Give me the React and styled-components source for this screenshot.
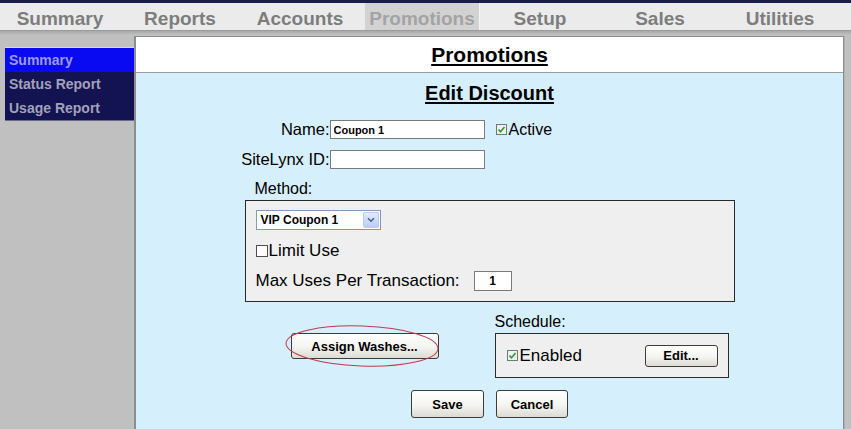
import React from 'react';
import styled, { createGlobalStyle } from 'styled-components';

const GlobalStyle = createGlobalStyle`
  html, body { margin: 0; padding: 0; height: 100%; overflow: hidden; }
  body { background: #c0c0c0; font-family: "Liberation Sans", Arial, sans-serif; color: #000; }
  #root { height: 100%; }
`;

const Page = styled.div`
  display: flex;
  flex-direction: column;
  height: 100%;
`;

const TopStrip = styled.div`
  flex: none;
  height: 3px;
  background: #1b1b4d;
`;

const TabBar = styled.nav`
  flex: none;
  display: flex;
  height: 27px;
  background: #ebebeb;
  border-bottom: 1px solid #9a9a9a;
`;

const Tab = styled.div`
  box-sizing: border-box;
  width: ${(p) => (p.$active ? '115px' : '120px')};
  margin-left: ${(p) => (p.$active ? '5px' : '0')};
  padding-top: 4px;
  line-height: 23px;
  text-align: center;
  font-size: 19px;
  font-weight: bold;
  color: ${(p) => (p.$active ? '#a3a3a3' : '#7d7d7d')};
  background: ${(p) => (p.$active ? '#d2d2d2' : 'transparent')};
  border-right: ${(p) => (p.$active ? '1px solid #f6f6f6' : 'none')};
`;

const Body = styled.div`
  flex: 1;
  min-height: 0;
  display: flex;
  padding-top: 5px;
  background: linear-gradient(#a9a9a9, #c0c0c0 4px);
`;

const Sidebar = styled.aside`
  flex: none;
  box-sizing: border-box;
  width: 134px;
  padding: 11px 0 0 5px;
`;

const Menu = styled.ul`
  list-style: none;
  margin: 0;
  padding: 0;
  background: #131352;
  border-top: 1px solid #d8d8e8;
  border-bottom: 1px solid #6a6a8a;
`;

const MenuItem = styled.li`
  height: 24px;
  line-height: 24px;
  padding-left: 4px;
  font-size: 14px;
  font-weight: bold;
  color: ${(p) => (p.$active ? '#9a9ae4' : '#a2a2b8')};
  background: ${(p) => (p.$active ? '#0a0af2' : '#131352')};
`;

const Main = styled.main`
  flex: 1;
  display: flex;
  flex-direction: column;
  border-left: 2px solid #8a8e8e;
  border-top: 1px solid #8c8c8c;
  border-right: 1px solid #8c8c8c;
  background: #d5effc;
`;

const Gutter = styled.div`
  flex: none;
  width: 7px;
  border-left: 1px solid #b0b0b0;
  box-sizing: border-box;
`;

const MainHeader = styled.header`
  height: 35px;
  display: flex;
  align-items: center;
  justify-content: center;
  background: #fff;
  border-bottom: 1px solid #9c9c9c;
`;

const Title = styled.h1`
  margin: 0;
  font-size: 21px;
  font-weight: bold;
  text-decoration: underline;
  text-underline-offset: 2px;
`;

const Content = styled.section`
  flex: 1;
  padding-top: 8px;
`;

const Heading = styled.h2`
  margin: 0;
  text-align: center;
  font-size: 20px;
  line-height: 24px;
  font-weight: bold;
  text-decoration: underline;
  text-underline-offset: 2px;
`;

const Form = styled.div`
  width: 490px;
  margin: 15px auto 0;
`;

const FieldRow = styled.div`
  display: flex;
  align-items: center;
  height: 19px;
  margin-top: ${(p) => p.$gap || 0}px;
`;

const Label = styled.label`
  width: 85px;
  display: flex;
  justify-content: flex-end;
  white-space: nowrap;
  font-size: 16.5px;
`;

const TextInput = styled.input`
  box-sizing: border-box;
  width: ${(p) => p.$w || 155}px;
  height: ${(p) => p.$h || 19}px;
  margin: 0 0 0 ${(p) => p.$ml || 0}px;
  padding: 0 3px;
  border: 1px solid #7a7a7a;
  background: #fff;
  font-family: "Liberation Sans", Arial, sans-serif;
  font-size: ${(p) => p.$fs || 11}px;
  font-weight: bold;
  color: #000;
  text-align: ${(p) => (p.$center ? 'center' : 'left')};
  outline: none;
`;

const CheckLabel = styled.span`
  display: flex;
  align-items: center;
  margin-left: ${(p) => p.$ml || 0}px;
  font-size: ${(p) => p.$fs || 16}px;
  white-space: nowrap;
`;

const Box = styled.span`
  box-sizing: border-box;
  width: ${(p) => (p.$checked ? 11 : 12)}px;
  height: ${(p) => (p.$checked ? 11 : 12)}px;
  margin-right: ${(p) => (p.$checked ? 2 : 1)}px;
  border: 1px solid ${(p) => (p.$checked ? '#6c7a80' : '#4f4f4f')};
  background: ${(p) => (p.$checked ? '#eef2ee' : '#fff')};
  display: inline-flex;
  align-items: center;
  justify-content: center;
`;

const Check = ({ checked }) => (
  <Box $checked={checked}>
    {checked && (
      <svg width="9" height="9" viewBox="0 0 9 9">
        <path d="M1.5 4.5 L3.5 6.7 L7.5 2" fill="none" stroke="#2e9c2e" strokeWidth="1.6" />
      </svg>
    )}
  </Box>
);

const GroupLabel = styled.div`
  margin-top: ${(p) => p.$gap || 0}px;
  padding-left: ${(p) => p.$pl || 0}px;
  line-height: 20px;
  font-size: 16px;
`;

const Fieldset = styled.div`
  margin-top: 1px;
  padding: 9px 10px 10px;
  border: 1px solid #2a2a2a;
  background: #efefef;
`;

const Select = styled.div`
  box-sizing: border-box;
  width: 125px;
  height: 20px;
  display: flex;
  align-items: center;
  padding-left: 4px;
  border: 1px solid #7f9db9;
  background: #fff;
  font-size: 12px;
  font-weight: bold;
`;

const SelectArrow = styled.span`
  box-sizing: border-box;
  margin-left: auto;
  margin-right: 1px;
  width: 16px;
  height: 16px;
  display: flex;
  align-items: center;
  justify-content: center;
  border: 1px solid #b8cbf2;
  border-radius: 2px;
  background: linear-gradient(#e2ebfe, #b9cdf8);
`;

const OptionRow = styled.div`
  display: flex;
  align-items: center;
  height: 20px;
  margin-top: ${(p) => p.$gap || 0}px;
  font-size: 17px;
`;

const BottomGrid = styled.div`
  display: grid;
  grid-template-columns: 250px 234px;
  margin-top: 10px;
`;

const ScheduleLabel = styled(GroupLabel)`
  grid-column: 2;
  grid-row: 1;
  margin-bottom: 1px;
`;

const Marked = styled.div`
  grid-column: 1;
  grid-row: 2;
  align-self: start;
  justify-self: start;
  margin-left: 46px;
  position: relative;
`;

const Ring = styled.svg`
  position: absolute;
  left: -8px;
  top: -8px;
  pointer-events: none;
  overflow: visible;
`;

const Button = styled.button`
  box-sizing: border-box;
  width: ${(p) => p.$w}px;
  height: ${(p) => p.$h}px;
  margin: 0;
  padding: 0;
  border: 1px solid #3c3c3c;
  border-radius: 3px;
  background: linear-gradient(#ffffff, #f4f4f0 55%, #dcdcd4);
  font-family: "Liberation Sans", Arial, sans-serif;
  font-size: 13px;
  font-weight: bold;
  color: #000;
  margin-left: ${(p) => (p.$push ? 'auto' : '0')};
`;

const ScheduleBox = styled.div`
  grid-column: 2;
  grid-row: 2;
  box-sizing: border-box;
  height: 45px;
  display: flex;
  align-items: center;
  padding: 0 10px 0 11px;
  border: 1px solid #2a2a2a;
  background: #efefef;
`;

const Actions = styled.div`
  display: flex;
  justify-content: center;
  gap: 12px;
  margin-top: 12px;
`;

const tabs = ['Summary', 'Reports', 'Accounts', 'Promotions', 'Setup', 'Sales', 'Utilities'];
const menu = ['Summary', 'Status Report', 'Usage Report'];

export default function App() {
  return (
    <>
      <GlobalStyle />
      <Page>
        <TopStrip />
        <TabBar>
          {tabs.map((t) => (
            <Tab key={t} $active={t === 'Promotions'}>{t}</Tab>
          ))}
        </TabBar>
        <Body>
          <Sidebar>
            <Menu>
              {menu.map((m, i) => (
                <MenuItem key={m} $active={i === 0}>{m}</MenuItem>
              ))}
            </Menu>
          </Sidebar>
          <Main>
            <MainHeader>
              <Title>Promotions</Title>
            </MainHeader>
            <Content>
              <Heading>Edit Discount</Heading>
              <Form>
                <FieldRow>
                  <Label>Name:</Label>
                  <TextInput readOnly defaultValue="Coupon 1" />
                  <CheckLabel $ml={11}>
                    <Check checked />
                    Active
                  </CheckLabel>
                </FieldRow>
                <FieldRow $gap={11}>
                  <Label>SiteLynx ID:</Label>
                  <TextInput readOnly defaultValue="" />
                </FieldRow>
                <GroupLabel $gap={10} $pl={10}>Method:</GroupLabel>
                <Fieldset>
                  <Select>
                    VIP Coupon 1
                    <SelectArrow>
                      <svg width="8" height="6" viewBox="0 0 8 6">
                        <path d="M1 1.2 L4 4.2 L7 1.2" fill="none" stroke="#4a5f8c" strokeWidth="1.6" />
                      </svg>
                    </SelectArrow>
                  </Select>
                  <OptionRow $gap={11}>
                    <Check />
                    Limit Use
                  </OptionRow>
                  <OptionRow $gap={10}>
                    Max Uses Per Transaction:
                    <TextInput readOnly defaultValue="1" $w={38} $h={20} $ml={14} $fs={12} $center />
                  </OptionRow>
                </Fieldset>
                <BottomGrid>
                  <ScheduleLabel>Schedule:</ScheduleLabel>
                  <Marked>
                    <Button $w={148} $h={26}>Assign Washes...</Button>
                    <Ring width="162" height="44" viewBox="0 0 162 44">
                      <ellipse
                        cx="79"
                        cy="21"
                        rx="76"
                        ry="20"
                        fill="none"
                        stroke="#c23a4a"
                        strokeWidth="1"
                        transform="rotate(2 79 21)"
                      />
                    </Ring>
                  </Marked>
                  <ScheduleBox>
                    <CheckLabel $fs={17}>
                      <Check checked />
                      Enabled
                    </CheckLabel>
                    <Button $w={73} $h={22} $push>Edit...</Button>
                  </ScheduleBox>
                </BottomGrid>
                <Actions>
                  <Button $w={73} $h={28}>Save</Button>
                  <Button $w={72} $h={28}>Cancel</Button>
                </Actions>
              </Form>
            </Content>
          </Main>
          <Gutter />
        </Body>
      </Page>
    </>
  );
}
